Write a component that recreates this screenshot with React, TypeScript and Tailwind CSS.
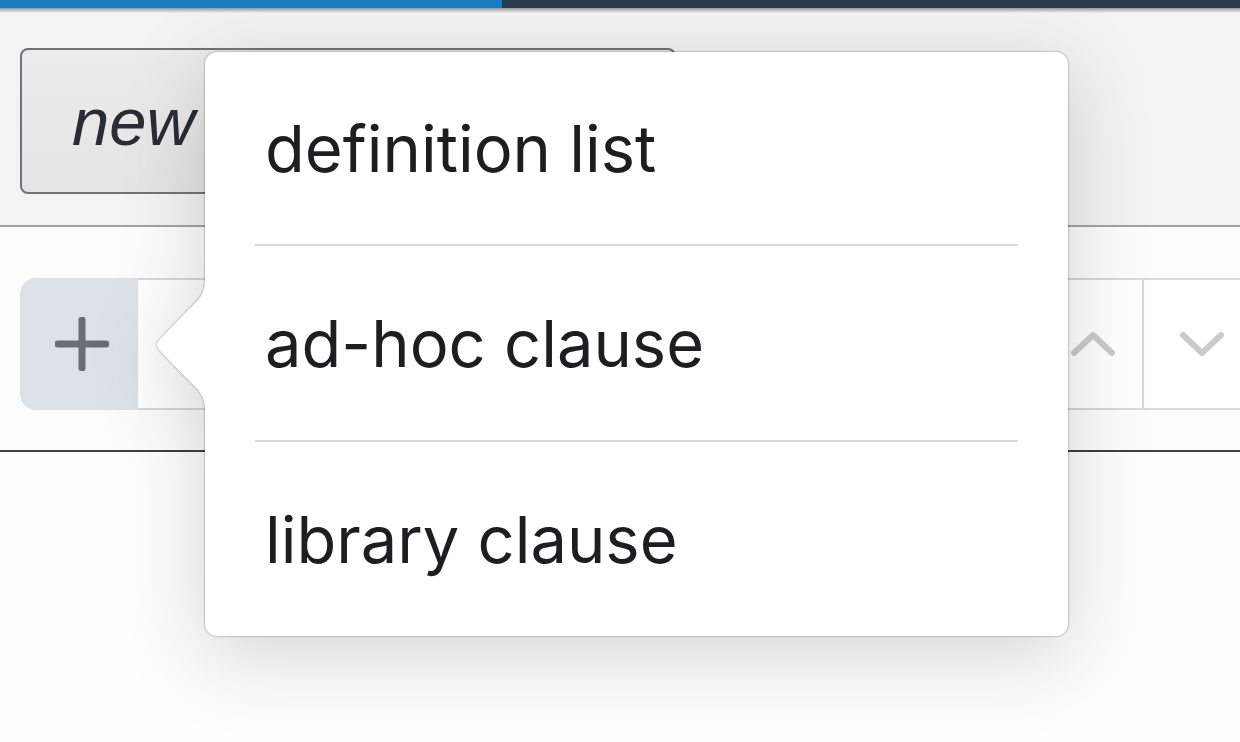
import React from "react";

export default function App() {
  return (
    <div className="relative h-[742px] w-[1240px] overflow-hidden bg-[#fdfdfd]" style={{ fontFamily: "Inter, 'Noto Sans', sans-serif" }}>
      {/* top bar */}
      <div className="flex h-[8px] w-full">
        <div className="h-full w-[502px] bg-[#1b7cc2]" />
        <div className="h-full flex-1 bg-[#2b3b4c]" />
      </div>
      {/* header */}
      <div className="relative h-[219px] border-b-2 border-[#a2a2a2] bg-[#f3f3f3] pt-[40px] pl-[20px]">
        <div className="pointer-events-none absolute left-0 right-0 top-0 h-[5px] bg-gradient-to-b from-[#9a9a9a] to-[#f3f3f3]" />
        <div className="flex h-[146px] w-[656px] items-center rounded-[8px] border-2 border-[#6f7277] bg-gradient-to-b from-[#ececec] to-[#e4e4e4] pl-[50px]">
          <span className="text-[67px] italic leading-none text-[#2a2d33]" style={{ fontFamily: "'Liberation Sans', Arial, sans-serif" }}>
            new
          </span>
        </div>
      </div>
      {/* row */}
      <div className="h-[223px] bg-[#fcfcfc] pt-[51px] pl-[20px]">
        <div className="flex h-[132px] w-[1240px]">
          <div className="flex h-full w-[118px] shrink-0 items-center justify-center rounded-l-[16px] bg-[#dde2e8] pl-[5px]">
            <svg width="54" height="54" viewBox="0 0 54 54">
              <path d="M27 3 V51 M3 27 H51" stroke="#696d74" strokeWidth="7" strokeLinecap="round" />
            </svg>
          </div>
          <div className="h-full flex-1 border-y-2 border-[#d6d8da] bg-white" />
          <div className="flex h-full w-[100px] shrink-0 items-center justify-center border-y-2 border-l-2 border-[#d6d8da] bg-white">
            <svg width="46" height="26" viewBox="0 0 46 26">
              <path d="M4 22 L23 4 L42 22" fill="none" stroke="#c9cbcd" strokeWidth="6" strokeLinecap="round" strokeLinejoin="round" />
            </svg>
          </div>
          <div className="flex h-full w-[118px] shrink-0 items-center justify-center border-y-2 border-l-2 border-[#d6d8da] bg-white">
            <svg width="46" height="26" viewBox="0 0 46 26">
              <path d="M4 4 L23 22 L42 4" fill="none" stroke="#c9cbcd" strokeWidth="6" strokeLinecap="round" strokeLinejoin="round" />
            </svg>
          </div>
        </div>
      </div>
      <div className="h-[2px] w-full bg-[#3b4049]" />

      {/* popover */}
      <div className="absolute left-[205px] top-[52px] w-[863px] [filter:drop-shadow(0_0_1px_rgba(0,0,0,0.45))_drop-shadow(0_18px_40px_rgba(0,0,0,0.16))]">
        <svg className="absolute left-[-50px] top-[228px]" width="52" height="130" viewBox="0 0 52 130">
          <path d="M52 0 L50 0 C50 14 43 21 33 30 L4 60 Q0 65 4 70 L33 100 C43 109 50 116 50 130 L52 130 Z" fill="#ffffff" />
        </svg>
        <div className="relative rounded-[12px] bg-white">
          <div className="flex h-[192px] items-center pl-[60px] text-[65px] leading-none text-[#1d1e20]">definition list</div>
          <div className="mx-[50px] h-[2px] bg-[#d8dbdd]" />
          <div className="flex h-[194px] items-center pl-[60px] text-[65px] leading-none text-[#1d1e20]">ad-hoc clause</div>
          <div className="mx-[50px] h-[2px] bg-[#d8dbdd]" />
          <div className="flex h-[194px] items-center pl-[60px] text-[65px] leading-none text-[#1d1e20]">library clause</div>
        </div>
      </div>
    </div>
  );
}
